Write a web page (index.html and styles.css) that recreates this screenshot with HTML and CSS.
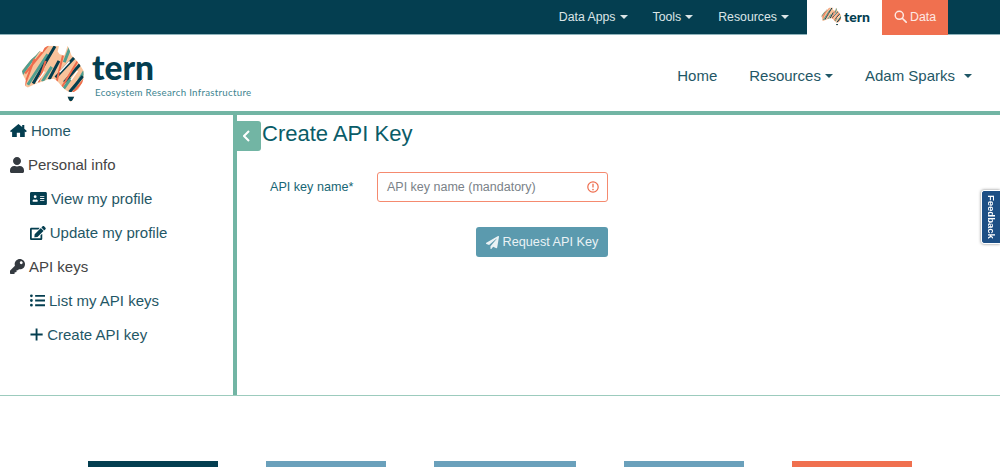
FILE: index.html
```html
<!DOCTYPE html>
<html lang="en">
<head>
    <meta charset="UTF-8">
    <title>Create API Key - TERN</title>
    <link rel="stylesheet" href="styles.css">
</head>
<body>
    <svg class="defs" width="0" height="0">
        <defs>
            <clipPath id="oz">
                <path d="M22 95 36 78 50 62 64 50 76 36 84 40 90 26 102 20 118 20 134 22 130 38 136 46 150 50 156 34 160 20 166 34 172 50 184 62 196 76 208 96 209 116 204 132 192 152 178 160 164 160 152 152 142 142 128 126 118 120 100 122 84 128 62 136 40 146 32 142 34 124 26 110ZM160 174 180 174 175 184 169 190 164 183Z"/>
            </clipPath>
            <symbol id="tern-map" viewBox="20 15 195 178">
                <g clip-path="url(#oz)">
                    <rect x="0" y="0" width="240" height="200" fill="#f8c39b"/>
                    <g fill="none">
                        <path stroke="#4f9f90" stroke-width="9" d="M18 112 74 32M40 138 100 46M84 128 112 84M150 70 170 20M178 152 210 98M148 150 170 118"/>
                        <path stroke="#033e4f" stroke-width="9" d="M56 134 122 22M104 122 134 66M124 116 182 54M150 130 198 76M166 160 206 112"/>
                        <path stroke="#ee6c4d" stroke-width="6" d="M32 104 102 18M72 130 94 66M126 132 146 50M142 146 194 60M176 162 210 122M30 140 60 60"/>
                        <path stroke="#ffffff" stroke-width="4" d="M66 132 90 98M136 100 166 68M170 124 190 96"/>
                        <path stroke="#033e4f" stroke-width="18" d="M158 178 184 178"/>
                    </g>
                </g>
            </symbol>
        </defs>
    </svg>

    <div class="topbar">
        <a class="top-link caret">Data Apps</a>
        <a class="top-link caret">Tools</a>
        <a class="top-link caret">Resources</a>
        <a class="top-logo">
            <svg class="mini-map"><use href="#tern-map"/></svg>
            <span class="mini-tern">tern</span>
        </a>
        <a class="top-data">
            <svg class="search-icon" viewBox="0 0 16 16"><circle cx="6.500" cy="6.500" r="5" fill="none" stroke="currentColor" stroke-width="1.800"/><path d="M10.200 10.200 15 15" stroke="currentColor" stroke-width="2" stroke-linecap="round"/></svg>
            Data
        </a>
    </div>

    <div class="navbar">
        <a class="brand">
            <svg class="brand-map"><use href="#tern-map"/></svg>
            <div class="brand-text">
                <div class="brand-name">tern</div>
                <div class="brand-sub">Ecosystem Research Infrastructure</div>
            </div>
        </a>
        <div class="nav-links">
            <a class="nav-link">Home</a>
            <a class="nav-link caret">Resources</a>
            <a class="nav-link caret caret-wide">Adam Sparks</a>
        </div>
    </div>

    <div class="main">
        <div class="sidebar">
            <a class="side-item side-link">
                <svg class="ic" viewBox="0 0 576 512"><path d="M288 32 0 272l36 44 36-30v194h160V336h112v144h160V286l36 30 36-44-88-74V64h-72v74z"/></svg>
                Home
            </a>
            <div class="side-item side-head">
                <svg class="ic ic-user" viewBox="0 0 448 512"><path d="M224 256c70.7 0 128-57.3 128-128S294.7 0 224 0 96 57.3 96 128s57.3 128 128 128zm89.6 32h-16.7c-22.2 10.2-46.9 16-72.9 16s-50.6-5.8-72.9-16h-16.7C60.2 288 0 348.2 0 422.4V464c0 26.5 21.5 48 48 48h352c26.5 0 48-21.5 48-48v-41.6c0-74.2-60.2-134.4-134.4-134.4z"/></svg>
                Personal info
            </div>
            <a class="side-item side-link sub">
                <svg class="ic" viewBox="0 0 576 512"><path fill-rule="evenodd" d="M48 32h480c26.500 0 48 21.500 48 48v352c0 26.500-21.500 48-48 48H48c-26.500 0-48-21.500-48-48V80c0-26.500 21.500-48 48-48zM176 144a48 48 0 1 0 0 96 48 48 0 0 0 0-96zM88 352c0 10 8 16 16 16h144c8 0 16-6 16-16v-16c0-28-24-48-52-48h-8c-12 5-24 8-28 8s-16-3-28-8h-8c-28 0-52 20-52 48zM344 176v32h144v-32zM344 240v32h144v-32zM344 304v32h144v-32z"/></svg>
                View my profile
            </a>
            <a class="side-item side-link sub">
                <svg class="ic ic-edit" viewBox="0 0 576 512"><path d="M402.6 83.2l90.2 90.2c3.8 3.8 3.8 10 0 13.8L274.4 405.6l-92.8 10.3c-12.4 1.4-22.9-9.1-21.5-21.5l10.3-92.8L388.8 83.2c3.8-3.8 10-3.8 13.8 0zm162-22.9l-48.8-48.8c-15.2-15.2-39.9-15.2-55.2 0l-35.4 35.4c-3.8 3.8-3.8 10 0 13.8l90.2 90.2c3.8 3.8 10 3.8 13.8 0l35.4-35.4c15.2-15.3 15.2-40 0-55.2zM384 346.2V448H64V128h229.8c3.2 0 6.2-1.3 8.5-3.5l40-40c7.6-7.6 2.2-20.5-8.5-20.5H48C21.5 64 0 85.5 0 112v352c0 26.5 21.5 48 48 48h352c26.5 0 48-21.5 48-48V306.2c0-10.7-12.9-16-20.5-8.5l-40 40c-2.2 2.3-3.500 5.300-3.500 8.500z"/></svg>
                Update my profile
            </a>
            <div class="side-item side-head">
                <svg class="ic" viewBox="0 0 512 512"><path d="M512 176.001C512 273.203 433.202 352 336 352c-11.22 0-22.19-1.062-32.827-3.069l-24.012 27.014A23.999 23.999 0 0 1 261.223 384H224v40c0 13.255-10.745 24-24 24h-40v40c0 13.255-10.745 24-24 24H24c-13.255 0-24-10.745-24-24v-78.059c0-6.365 2.529-12.47 7.029-16.971l161.802-161.802C163.108 213.814 160 195.271 160 176 160 78.798 238.797.001 335.999 0 433.488-.001 512 78.511 512 176.001zM336 128c0 26.51 21.49 48 48 48s48-21.49 48-48-21.49-48-48-48-48 21.49-48 48z"/></svg>
                API keys
            </div>
            <a class="side-item side-link sub">
                <svg class="ic" viewBox="0 0 512 512"><path d="M48 48a48 48 0 1 0 0 96 48 48 0 0 0 0-96zm0 160a48 48 0 1 0 0 96 48 48 0 0 0 0-96zm0 160a48 48 0 1 0 0 96 48 48 0 0 0 0-96zM176 64h336v64H176zm0 160h336v64H176zm0 160h336v64H176z"/></svg>
                List my API keys
            </a>
            <a class="side-item side-link sub">
                <svg class="ic" viewBox="0 0 448 512"><path d="M192 48h64v176h176v64H256v176h-64V288H16v-64h176z"/></svg>
                Create API key
            </a>
        </div>

        <div class="content">
            <a class="collapse-tab">
                <svg width="8" height="12" viewBox="0 0 8 12"><path d="M6 1 1 6l5 5" fill="none" stroke="#fff" stroke-width="2"/></svg>
            </a>
            <h1 class="page-title">Create API Key</h1>
            <form class="key-form">
                <div class="form-row">
                    <label class="form-label">API key name*</label>
                    <div class="input-box">
                        <span class="placeholder">API key name (mandatory)</span>
                        <svg class="warn" viewBox="0 0 12 12"><circle cx="6" cy="6" r="5.200" fill="none" stroke="#ee6c4d" stroke-width="1.200"/><path d="M6 2.800v3.800" stroke="#ee6c4d" stroke-width="1.300"/><circle cx="6" cy="8.600" r=".8" fill="#ee6c4d"/></svg>
                    </div>
                </div>
                <div class="form-actions">
                    <a class="btn-request">
                        <svg class="plane" viewBox="0 0 512 512"><path d="M476 3.200L12.500 270.600c-18.100 10.400-15.800 35.600 2.200 43.200L121 358.400l287.300-253.200c5.500-4.900 13.300 2.600 8.600 8.300L176 407v80.500c0 23.600 28.500 32.900 42.500 15.800L282 426l124.600 52.200c14.200 6 30.400-2.900 33-18.200l72-432C515 7.800 493.300-6.800 476 3.200z"/></svg>
                        Request API Key
                    </a>
                </div>
            </form>
        </div>
    </div>

    <div class="footer-bars">
        <span class="fbar fbar-dark"></span>
        <span class="fbar fbar-blue"></span>
        <span class="fbar fbar-blue fbar-wide"></span>
        <span class="fbar fbar-blue"></span>
        <span class="fbar fbar-orange"></span>
    </div>

    <a class="feedback">Feedback</a>
</body>
</html>
```

FILE: styles.css
```css
html, body {
    height: 474px;
    overflow: hidden;
}

body {
    margin: 0;
    font-family: "Liberation Sans", Arial, sans-serif;
    background-color: #fff;
    color: #043e50;
}

.defs {
    display: block;
    height: 0;
}

/* top strip */
.topbar {
    display: flex;
    justify-content: flex-end;
    align-items: stretch;
    height: 35px;
    padding-right: 52px;
    background-color: #043e50;
    box-shadow: inset 0 -1px 0 #8fb3bb;
}

.top-link {
    display: flex;
    align-items: center;
    padding-bottom: 2px;
    box-sizing: border-box;
    color: #dbe5e7;
    font-size: 12.300px;
    margin-right: 25px;
}

.top-link:nth-child(3) {
    margin-right: 18px;
}

.caret::after {
    content: "";
    display: inline-block;
    margin-left: 4px;
    border-top: 4px solid currentColor;
    border-left: 4px solid transparent;
    border-right: 4px solid transparent;
}

.top-logo {
    display: flex;
    align-items: center;
    width: 75px;
    height: 35px;
    padding: 0 0 3px 14px;
    box-sizing: border-box;
    background-color: #fff;
}

.mini-map {
    width: 21px;
    height: 19px;
    margin-right: 2px;
}

.mini-tern {
    font-family: Lato, sans-serif;
    font-weight: 900;
    font-size: 14px;
    color: #043e50;
}

.top-data {
    display: flex;
    align-items: center;
    justify-content: center;
    width: 66px;
    height: 35px;
    padding-bottom: 2px;
    box-sizing: border-box;
    background-color: #f0704f;
    color: #fde9e3;
    font-size: 12.300px;
}

.search-icon {
    width: 13px;
    height: 13px;
    margin-right: 3px;
}

/* main nav */
.navbar {
    display: flex;
    justify-content: space-between;
    align-items: center;
    height: 76px;
    padding: 0 28px 0 21px;
    border-bottom: 4px solid #72b5a4;
}

.brand {
    display: flex;
    align-items: flex-start;
    padding-top: 1px;
}

.brand-map {
    width: 65px;
    height: 59px;
    margin-right: 6px;
}

.brand-name {
    font-family: Lato, sans-serif;
    font-weight: 900;
    font-size: 33.500px;
    line-height: 38px;
    margin-top: 4px;
    color: #043e50;
}

.brand-sub {
    margin: 0 0 0 3px;
    font-family: Lato, sans-serif;
    font-size: 9.700px;
    letter-spacing: .3px;
    line-height: 12px;
    white-space: nowrap;
    color: #3d8490;
}

.nav-links {
    display: flex;
    gap: 32px;
    padding-top: 5px;
}

.nav-link {
    display: flex;
    align-items: center;
    font-size: 15px;
    color: #1f5766;
}

.caret-wide::after {
    margin-left: 9px;
}

/* sidebar + content */
.main {
    display: flex;
    height: 280px;
    border-bottom: 1px solid #9ccbbd;
}

.sidebar {
    flex: none;
    width: 233px;
    border-right: 4px solid #72b5a4;
}

.side-item {
    display: flex;
    align-items: center;
    height: 34px;
    box-sizing: border-box;
    padding: 0 0 3px 10px;
    font-size: 15px;
}

.side-link {
    color: #1f5766;
}

.side-head {
    color: #444;
}

.sub {
    padding-left: 30px;
}

.ic {
    height: 15px;
    width: auto;
    margin-right: 4px;
    fill: #043e50;
}

.side-head .ic {
    fill: #343a40;
}

.ic-user {
    height: 16px;
}

.ic-edit {
    height: 14px;
}

.content {
    position: relative;
    flex: 1;
    padding-left: 25px;
}

.collapse-tab {
    position: absolute;
    left: -1px;
    top: 6px;
    display: flex;
    align-items: center;
    justify-content: center;
    width: 25px;
    height: 30px;
    padding-right: 3px;
    box-sizing: border-box;
    border-radius: 0 3px 3px 0;
    background-color: #72b5a4;
}

.page-title {
    margin: 5px 0 0;
    font-size: 22px;
    font-weight: 400;
    line-height: 28px;
    color: #0a5c68;
}

.key-form {
    width: 346px;
    margin-top: 24px;
}

.form-row {
    display: flex;
    align-items: center;
    justify-content: space-between;
}

.form-label {
    padding-left: 8px;
    font-size: 12.600px;
    color: #176675;
}

.input-box {
    display: flex;
    align-items: center;
    justify-content: space-between;
    width: 231px;
    height: 30px;
    box-sizing: border-box;
    padding: 0 8px 0 9px;
    border: 1px solid #f58a6f;
    border-radius: 3px;
}

.placeholder {
    font-size: 12.500px;
    color: #7a8288;
}

.warn {
    width: 12px;
    height: 12px;
}

.form-actions {
    display: flex;
    justify-content: flex-end;
    margin-top: 25px;
}

.btn-request {
    display: flex;
    align-items: center;
    justify-content: center;
    width: 132px;
    height: 30px;
    border-radius: 3px;
    background-color: #5b9aae;
    color: #eaf2f5;
    font-size: 12.700px;
}

.plane {
    width: 13px;
    height: 13px;
    margin-right: 4px;
    fill: #eaf2f5;
}

/* footer colour bars */
.footer-bars {
    display: flex;
    gap: 48px;
    padding: 65px 0 0 88px;
}

.fbar {
    width: 120px;
    height: 6px;
}

.fbar-dark {
    width: 130px;
    background-color: #043e50;
}

.fbar-blue {
    background-color: #6aa0bb;
}

.fbar-wide {
    width: 142px;
}

.fbar-orange {
    background-color: #f0704f;
}

/* feedback tab on the right edge */
.feedback {
    position: fixed;
    right: 0;
    top: 190px;
    width: 18px;
    height: 52px;
    display: flex;
    align-items: center;
    justify-content: center;
    writing-mode: vertical-rl;
    background-color: #1d4f85;
    color: #fff;
    font-size: 9.500px;
    font-weight: 700;
    border: 1px solid #fff;
    border-right: 0;
    border-radius: 3px 0 0 3px;
    box-shadow: 0 0 3px rgba(0, 0, 0, .5);
}
```
